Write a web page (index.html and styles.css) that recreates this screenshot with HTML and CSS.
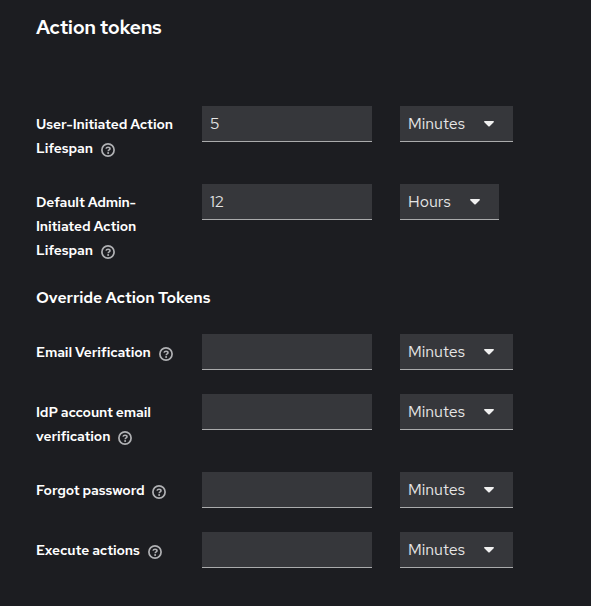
FILE: index.html
```html
<!DOCTYPE html>
<html lang="en">
<head>
<meta charset="utf-8">
<title>Action tokens</title>
<link rel="stylesheet" href="styles.css">
</head>
<body>
<svg class="defs" aria-hidden="true">
  <symbol id="help" viewBox="0 0 14 14">
    <circle cx="7" cy="7" r="6.1" fill="none" stroke="currentColor" stroke-width="1.7"/>
    <path d="M5 5.600C5.300 4.500 6 4.200 7 4.200c1.200 0 2 .6 2 1.500C9 6.900 7.200 6.800 7.200 8.200" fill="none" stroke="currentColor" stroke-width="1.600"/>
    <circle cx="7.100" cy="9.900" r="1" fill="currentColor"/>
  </symbol>
  <symbol id="caret" viewBox="0 0 10 6">
    <path d="M.8 0h8.400c.7 0 1 .8.500 1.300L5.700 5.300c-.4.400-1 .4-1.400 0L.3 1.300C-.2.800.1 0 .8 0z" fill="currentColor"/>
  </symbol>
</svg>
<main class="panel">
  <h1 class="title">Action tokens</h1>
  <form class="form">
    <div class="row">
      <div class="label">User-Initiated Action<br>Lifespan<svg class="help"><use href="#help"/></svg></div>
      <div class="input">5</div>
      <div class="select">Minutes<svg class="caret"><use href="#caret"/></svg></div>
    </div>
    <div class="row">
      <div class="label">Default Admin-<br>Initiated Action<br>Lifespan<svg class="help"><use href="#help"/></svg></div>
      <div class="input input-tight">12</div>
      <div class="select">Hours<svg class="caret"><use href="#caret"/></svg></div>
    </div>
    <h2 class="subtitle">Override Action Tokens</h2>
    <div class="row">
      <div class="label">Email Verification<svg class="help"><use href="#help"/></svg></div>
      <div class="input"></div>
      <div class="select">Minutes<svg class="caret"><use href="#caret"/></svg></div>
    </div>
    <div class="row">
      <div class="label">IdP account email<br>verification<svg class="help"><use href="#help"/></svg></div>
      <div class="input"></div>
      <div class="select">Minutes<svg class="caret"><use href="#caret"/></svg></div>
    </div>
    <div class="row">
      <div class="label">Forgot password<svg class="help"><use href="#help"/></svg></div>
      <div class="input"></div>
      <div class="select">Minutes<svg class="caret"><use href="#caret"/></svg></div>
    </div>
    <div class="row">
      <div class="label">Execute actions<svg class="help"><use href="#help"/></svg></div>
      <div class="input"></div>
      <div class="select">Minutes<svg class="caret"><use href="#caret"/></svg></div>
    </div>
  </form>
</main>
</body>
</html>
```
FILE: styles.css
```css
* { box-sizing: border-box; }
body {
  margin: 0;
  background: #1c1d21;
  color: #fff;
  font-family: "Red Hat Text", Inter, "Liberation Sans", sans-serif;
}
.defs { display: none; }
.panel { height: 606px; padding: 14px 36px 0; }
.title {
  margin: 0 0 66px;
  font-size: 20px;
  line-height: 26px;
  font-weight: 600;
  letter-spacing: -0.38px;
}
.form { display: flex; flex-direction: column; gap: 24px; }
.row {
  display: grid;
  grid-template-columns: 166px 170px max-content;
  align-items: start;
}
.label {
  padding-top: 6px;
  font-size: 14px;
  line-height: 24px;
  font-weight: 600;
  letter-spacing: -0.13px;
  white-space: nowrap;
}
.help {
  width: 14px;
  height: 14px;
  margin-left: 8px;
  vertical-align: -4px;
  color: #b0b1b4;
}
.input, .select {
  height: 36px;
  padding: 0 8px;
  background: #36373b;
  border-bottom: 1px solid #aaabac;
  color: #e6e6e6;
  font-size: 16px;
  line-height: 36px;
}
.input-tight { letter-spacing: -0.5px; }
.select {
  display: flex;
  align-items: center;
  margin-left: 28px;
  padding-right: 19px;
}
.caret { width: 10px; height: 6px; margin-left: 19px; color: #f0f0f0; }
.subtitle {
  margin: 0;
  font-size: 16px;
  line-height: 24px;
  font-weight: 600;
  letter-spacing: -0.12px;
}
```
